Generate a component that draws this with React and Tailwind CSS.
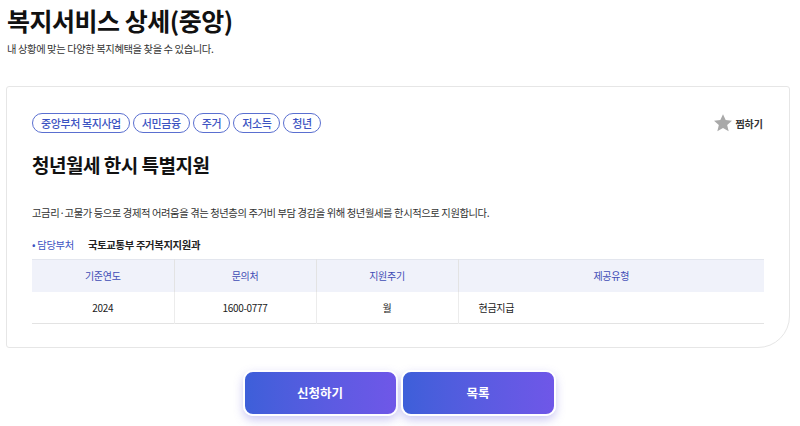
export default function App() {
  const tags = ["중앙부처 복지사업", "서민금융", "주거", "저소득", "청년"];
  return (
    <div
      className="w-[800px] h-[426px] bg-white overflow-hidden px-[6px] pt-[3px] text-[#222]"
      style={{ fontFamily: '"Noto Sans CJK KR", "Noto Sans", sans-serif' }}
    >
      <h1 className="text-[25px] font-bold leading-[34px] pl-[1px] tracking-[-0.5px] text-[#111]">
        복지서비스 상세(중앙)
      </h1>
      <p className="text-[10.3px] leading-[16px] mt-[4px] pl-[1px] text-[#333] tracking-[-0.4px]">
        내 상황에 맞는 다양한 복지혜택을 찾을 수 있습니다.
      </p>

      <div className="mt-[29px] w-[784px] h-[262px] border border-[#e6e6e6] rounded-tl-[3px] rounded-tr-[3px] rounded-bl-[3px] rounded-br-[32px] px-[25px] pt-[26px]">
        <div className="flex items-center justify-between">
          <div className="flex gap-[3px]">
            {tags.map((t) => (
              <span
                key={t}
                className="h-[20px] px-[8px] rounded-full border border-[#5a6fd0] text-[#3c53c2] text-[11px] leading-[18px] tracking-[-0.4px] font-medium"
              >
                {t}
              </span>
            ))}
          </div>
          <div className="flex items-center gap-[2px] pr-[1px]">
            <svg width="20" height="20" viewBox="0 0 24 24">
              <path
                d="M12 1.5l3.2 7 7.6.7-5.8 5.1 1.8 7.5L12 17.9l-6.8 3.9 1.8-7.5L1.2 9.2l7.6-.7z"
                fill="#a9a9a9"
              />
            </svg>
            <span className="text-[10px] font-bold text-[#333]">찜하기</span>
          </div>
        </div>

        <h2 className="mt-[18px] text-[19px] font-bold leading-[28px] tracking-[-0.5px] text-[#111]">
          청년월세 한시 특별지원
        </h2>

        <p className="mt-[26px] text-[10.3px] leading-[16px] text-[#333] tracking-[-0.4px]">
          고금리·고물가 등으로 경제적 어려움을 겪는 청년층의 주거비 부담 경감을 위해 청년월세를 한시적으로 지원합니다.
        </p>

        <div className="mt-[16px] flex items-center text-[10.3px] leading-[16px] tracking-[-0.3px]">
          <span className="text-[#3c53c2] w-[56px]">• 담당부처</span>
          <span className="font-bold text-[#222]">국토교통부 주거복지지원과</span>
        </div>

        <table className="mt-[6px] w-[732px] border-collapse text-[10px] tracking-[-0.3px]">
          <thead>
            <tr className="bg-[#f0f2fa] h-[32px] border-t border-[#e3e6ee]">
              <th className="w-[142px] font-normal text-[#3f4cb5] border-r border-[#e3e3e3]">기준연도</th>
              <th className="w-[142px] font-normal text-[#3f4cb5] border-r border-[#e3e3e3]">문의처</th>
              <th className="w-[142px] font-normal text-[#3f4cb5] border-r border-[#e3e3e3]">지원주기</th>
              <th className="font-normal text-[#3f4cb5]">제공유형</th>
            </tr>
          </thead>
          <tbody>
            <tr className="h-[32px] border-b border-[#e3e3e3] text-[#222]">
              <td className="text-center border-r border-[#ececec]">2024</td>
              <td className="text-center border-r border-[#ececec]">1600-0777</td>
              <td className="text-center border-r border-[#ececec]">월</td>
              <td className="pl-[20px]">현금지급</td>
            </tr>
          </tbody>
        </table>
      </div>

      <div className="mt-[22px] flex justify-center gap-[3px] pr-[2px]">
        {["신청하기", "목록"].map((b) => (
          <button
            key={b}
            className="w-[155px] h-[46px] rounded-[10px] border-2 border-white bg-gradient-to-r from-[#3d5fd9] to-[#6f57e8] text-white text-[12.5px] font-bold shadow-[0_4px_10px_rgba(110,100,220,0.35)]"
          >
            {b}
          </button>
        ))}
      </div>
    </div>
  );
}
